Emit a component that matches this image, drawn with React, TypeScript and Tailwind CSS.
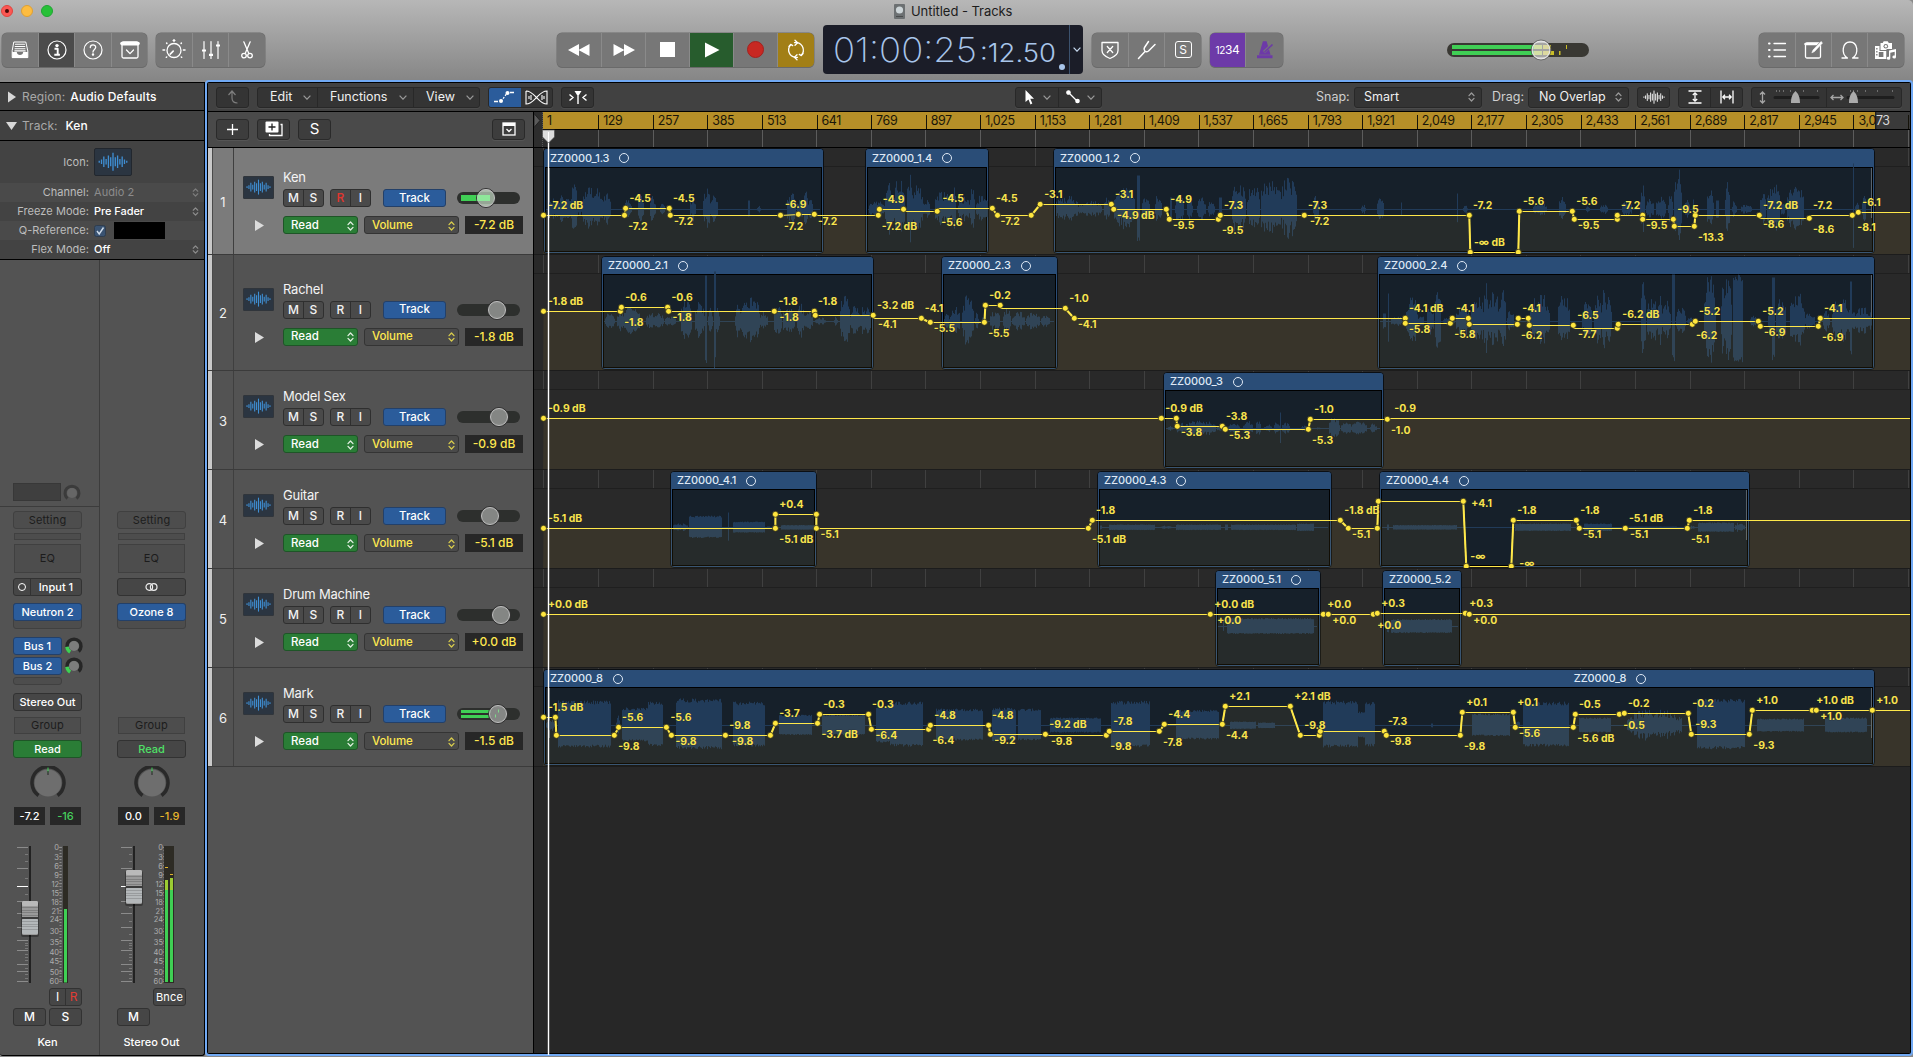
import React from "react";

type P = [number, number, 0?];
type L = [number, number, string];
type W = [number, number, number, number?];
type Region = { x: number; r: number; name: string; dot?: boolean; second?: number; fadeIn?: boolean; fadeOut?: boolean };
type Track = {
  n: number; name: string; top: number; h: string; height: number; db: string; knob: number; meter?: number;
  wy: number; regions: Region[]; pts: P[]; labels: L[]; waves: W[];
};

const tracks: Track[] = [
  {
    n: 1, name: "Ken", top: 148, h: "h-[107px]", height: 107, db: "-7.2 dB", knob: 29, meter: 1, wy: 209.5,
    regions: [{ x: 543, r: 823, name: "ZZ0000_1.3", dot: true, fadeIn: true }, { x: 865, r: 988, name: "ZZ0000_1.4", dot: true }, { x: 1053, r: 1874, name: "ZZ0000_1.2", dot: true, fadeOut: true }],
    pts: [[543.5, 215], [624.5, 215], [625.6, 208], [669.3, 208], [670.3, 215], [780.5, 215], [798.4, 214], [814.3, 214], [815, 215, 0], [878.3, 215], [879.4, 209], [903.5, 209], [904, 211, 0], [937.2, 211], [938, 208, 0], [992.3, 208], [997.5, 215], [1031.2, 215], [1040.2, 204], [1111.3, 204], [1113.7, 209], [1166.3, 209], [1169.3, 219], [1218.3, 219], [1220.3, 215], [1304.3, 215], [1469.3, 215], [1470.3, 252], [1518.3, 252], [1519.3, 211], [1572.3, 211], [1574.3, 219], [1617.3, 219], [1617.3, 215], [1642.7, 215], [1642.7, 219], [1673.3, 219], [1674.3, 226], [1694.3, 226], [1695.3, 215], [1759.3, 215], [1760, 218, 0], [1809.3, 218], [1810, 215, 0], [1852.3, 215], [1858.3, 212], [1910, 212, 0]],
    labels: [[548, 205, "-7.2 dB"], [629.4, 198, "-4.5"], [628.3, 226, "-7.2"], [673, 198, "-4.5"], [674, 221, "-7.2"], [785, 204, "-6.9"], [784, 226, "-7.2"], [818, 221, "-7.2"], [882.8, 199, "-4.9"], [881.8, 226, "-7.2 dB"], [942.4, 198, "-4.5"], [941.3, 222, "-5.6"], [996, 198, "-4.5"], [1000.6, 221, "-7.2"], [1044.3, 194, "-3.1"], [1115, 194, "-3.1"], [1117, 215, "-4.9 dB"], [1170.3, 199, "-4.9"], [1173, 225, "-9.5"], [1224, 205, "-7.3"], [1222, 230, "-9.5"], [1308, 205, "-7.3"], [1310, 221, "-7.2"], [1473, 205, "-7.2"], [1474, 242, "-∞ dB"], [1523, 201, "-5.6"], [1576.3, 201, "-5.6"], [1578, 225, "-9.5"], [1621, 205, "-7.2"], [1646, 225, "-9.5"], [1677.3, 209, "-9.5"], [1698, 237, "-13.3"], [1763, 205, "-7.2 dB"], [1763, 224, "-8.6"], [1813, 205, "-7.2"], [1813, 229, "-8.6"], [1862.3, 202, "-6.1"], [1857.3, 227, "-8.1"]],
    waves: [[549, 557, 12], [557, 570, 15], [570, 578, 27], [578, 582, 10], [582, 603, 24], [603, 611, 18], [625, 632, 12], [638, 644, 16], [650, 656, 14], [660, 665, 6], [690, 696, 13], [703, 711, 21], [711, 718, 14], [748, 750, 9], [757, 761, 5], [787, 796, 18], [797, 804, 12], [804, 808, 36], [808, 813, 13], [869, 885, 9], [885, 893, 27], [893, 905, 29], [907, 912, 41], [912, 923, 27], [923, 930, 11], [935, 952, 18], [952, 956, 28], [958, 970, 13], [970, 975, 24], [976, 988, 14], [1056, 1078, 14], [1078, 1102, 9], [1104, 1110, 13], [1114, 1135, 22], [1137, 1140, 34], [1142, 1150, 13], [1155, 1162, 16], [1170, 1172, 12], [1175, 1184, 15], [1187, 1193, 12], [1197, 1206, 13], [1208, 1215, 9], [1219, 1222, 12], [1232, 1246, 28], [1247, 1260, 27], [1261, 1280, 32], [1280, 1297, 32], [1313, 1319, 16], [1361, 1366, 5], [1377, 1384, 15], [1401, 1402, 7], [1457, 1458, 16], [1463, 1468, 4], [1533, 1547, 7], [1559, 1566, 15], [1586, 1590, 4], [1600, 1608, 5], [1622, 1632, 9], [1640, 1645, 27], [1646, 1654, 12], [1656, 1666, 13], [1668, 1673, 15], [1674, 1682, 42], [1684, 1690, 14], [1693, 1694, 10], [1707, 1714, 23], [1716, 1719, 9], [1725, 1730, 28], [1732, 1737, 9], [1741, 1752, 5], [1760, 1766, 20], [1767, 1780, 27], [1781, 1785, 11], [1787, 1804, 25], [1853, 1854, 46], [1855, 1859, 10], [1862, 1866, 20]],
  },
  {
    n: 2, name: "Rachel", top: 255, h: "h-[116px]", height: 116, db: "-1.8 dB", knob: 40, wy: 321.5,
    regions: [{ x: 601, r: 873, name: "ZZ0000_2.1", dot: true }, { x: 941, r: 1057, name: "ZZ0000_2.3", dot: true }, { x: 1377, r: 1874, name: "ZZ0000_2.4", dot: true, fadeOut: true }],
    pts: [[543.5, 311], [620.4, 311], [621.4, 307], [667.6, 307], [668.6, 311], [774.3, 311], [814.3, 311], [815.3, 315], [873.2, 315], [874, 318, 0], [921.4, 318], [930.3, 322], [984.4, 322], [985.4, 305], [1000.2, 305], [1001, 308, 0], [1065.3, 308], [1074.3, 318], [1405.3, 318], [1405.3, 323], [1450.3, 323], [1452.3, 318], [1468.3, 318], [1469.3, 324], [1517.3, 324], [1518.3, 318], [1528.3, 318], [1529.3, 325], [1573.3, 325], [1574, 328, 0], [1617.3, 328], [1618.3, 324], [1692.3, 324], [1695.3, 321], [1758.3, 321], [1760.3, 326], [1818.3, 326], [1820.3, 318], [1910, 318, 0]],
    labels: [[548, 301, "-1.8 dB"], [625.2, 297, "-0.6"], [624.2, 322, "-1.8"], [671.4, 297, "-0.6"], [672.4, 317, "-1.8"], [778.5, 301, "-1.8"], [779.5, 317, "-1.8"], [818, 301, "-1.8"], [877, 305, "-3.2 dB"], [878, 324, "-4.1"], [924.8, 308, "-4.1"], [933.8, 328, "-5.5"], [989.2, 295, "-0.2"], [988.2, 333, "-5.5"], [1069.3, 298, "-1.0"], [1078, 324, "-4.1"], [1409, 308, "-4.1 dB"], [1409, 329, "-5.8"], [1456, 308, "-4.1"], [1454.3, 334, "-5.8"], [1522.3, 308, "-4.1"], [1521, 335, "-6.2"], [1577.3, 315, "-6.5"], [1578, 334, "-7.7"], [1622.3, 314, "-6.2 dB"], [1699, 311, "-5.2"], [1696, 335, "-6.2"], [1762.3, 311, "-5.2"], [1764, 332, "-6.9"], [1824, 308, "-4.1"], [1822, 337, "-6.9"]],
    waves: [[605, 615, 9], [617, 624, 12], [624, 640, 17], [646, 664, 9], [665, 676, 5], [681, 692, 24], [695, 705, 20], [705, 707, 46], [708, 713, 14], [714, 716, 50], [716, 720, 18], [735, 742, 17], [742, 760, 29], [760, 768, 10], [774, 782, 20], [783, 795, 15], [797, 804, 20], [804, 813, 10], [815, 826, 4], [834, 838, 5], [840, 850, 29], [850, 860, 16], [860, 871, 16], [944, 950, 8], [950, 960, 16], [962, 974, 27], [975, 979, 10], [982, 985, 4], [990, 1000, 11], [1003, 1011, 14], [1012, 1025, 10], [1026, 1040, 9], [1041, 1050, 6], [1383, 1386, 8], [1388, 1389, 28], [1391, 1402, 6], [1406, 1418, 26], [1418, 1424, 8], [1427, 1434, 16], [1435, 1441, 44], [1443, 1455, 5], [1456, 1470, 16], [1471, 1484, 27], [1484, 1488, 44], [1488, 1500, 30], [1500, 1506, 32], [1507, 1514, 12], [1530, 1550, 27], [1558, 1570, 29], [1582, 1592, 20], [1594, 1602, 26], [1602, 1606, 44], [1606, 1612, 28], [1641, 1646, 47], [1647, 1658, 24], [1658, 1662, 34], [1662, 1671, 24], [1672, 1675, 47], [1676, 1686, 15], [1687, 1694, 4], [1704, 1716, 47], [1721, 1732, 47], [1733, 1743, 47, 1], [1750, 1758, 6], [1768, 1772, 16], [1772, 1775, 44], [1776, 1786, 24], [1790, 1805, 29], [1805, 1815, 9], [1823, 1830, 12], [1832, 1850, 24], [1850, 1852, 40], [1852, 1872, 14]],
  },
  {
    n: 3, name: "Model Sex", top: 371, h: "h-[99px]", height: 99, db: "-0.9 dB", knob: 42, wy: 428.5,
    regions: [{ x: 1163, r: 1383, name: "ZZ0000_3", dot: true }],
    pts: [[543.5, 418], [1161.3, 418], [1176.3, 418], [1177.3, 426], [1222.3, 426], [1225.3, 429], [1308.3, 429], [1310.3, 419], [1387.3, 419], [1388, 418, 0], [1910, 418, 0]],
    labels: [[548, 408, "-0.9 dB"], [1165.3, 408, "-0.9 dB"], [1181, 432, "-3.8"], [1226, 416, "-3.8"], [1229, 435, "-5.3"], [1314.3, 409, "-1.0"], [1312, 440, "-5.3"], [1394.3, 408, "-0.9"], [1391, 430, "-1.0"]],
    waves: [[1168, 1173, 3], [1176, 1186, 6], [1186, 1216, 8], [1217, 1222, 4], [1228, 1240, 5], [1243, 1253, 8], [1256, 1261, 10], [1264, 1272, 4], [1274, 1280, 9], [1280, 1281, 16], [1282, 1290, 6], [1301, 1307, 3], [1312, 1322, 1], [1329, 1340, 12], [1341, 1352, 7], [1352, 1367, 7], [1370, 1377, 5]],
  },
  {
    n: 4, name: "Guitar", top: 470, h: "h-[99px]", height: 99, db: "-5.1 dB", knob: 33, wy: 527.5,
    regions: [{ x: 670, r: 816, name: "ZZ0000_4.1", dot: true }, { x: 1097, r: 1331, name: "ZZ0000_4.3", dot: true }, { x: 1379, r: 1749, name: "ZZ0000_4.4", dot: true, fadeOut: true }],
    pts: [[543.5, 528], [775.4, 528], [775.4, 514], [816.4, 514], [816.4, 528], [1088.3, 528], [1092.3, 520], [1340.3, 520], [1348.3, 528], [1377.3, 528], [1378.3, 501], [1463.3, 501], [1466.3, 566], [1511.3, 566], [1513.3, 520], [1576.3, 520], [1579.3, 528], [1625.3, 528], [1687.3, 528], [1689.3, 520], [1910, 520, 0]],
    labels: [[548, 518, "-5.1 dB"], [779.3, 504, "+0.4"], [779.3, 539, "-5.1 dB"], [820.4, 534, "-5.1"], [1096, 510, "-1.8"], [1092, 539, "-5.1 dB"], [1344.3, 510, "-1.8 dB"], [1352, 534, "-5.1"], [1471.3, 503, "+4.1"], [1470.3, 556, "-∞"], [1519.3, 563, "-∞"], [1517.3, 510, "-1.8"], [1580.3, 510, "-1.8"], [1583, 534, "-5.1"], [1629, 518, "-5.1 dB"], [1630, 534, "-5.1"], [1693.3, 510, "-1.8"], [1691, 539, "-5.1"]],
    waves: [[673, 688, 4], [689, 722, 12, 1], [728, 729, 15], [733, 765, 6, 1], [767, 770, 1], [781, 815, 2.5, 1], [1100, 1102, 2], [1109, 1155, 3, 1], [1160, 1172, 2], [1176, 1221, 3, 1], [1225, 1228, 3], [1231, 1296, 3, 1], [1297, 1314, 4, 1], [1387, 1389, 3], [1393, 1457, 2.5, 1], [1515, 1571, 4, 1], [1584, 1612, 4, 1], [1625, 1677, 1, 1], [1690, 1695, 2], [1698, 1734, 5, 1], [1735, 1745, 5]],
  },
  {
    n: 5, name: "Drum Machine", top: 569, h: "h-[99px]", height: 99, db: "+0.0 dB", knob: 44, wy: 626.5,
    regions: [{ x: 1215, r: 1320, name: "ZZ0000_5.1", dot: true }, { x: 1382, r: 1461, name: "ZZ0000_5.2" }],
    pts: [[543.5, 614], [1210.3, 614], [1323.3, 614], [1328.3, 614], [1373.3, 614], [1377.3, 613], [1465.3, 613], [1469.3, 614], [1910, 614, 0]],
    labels: [[548, 604, "+0.0 dB"], [1214.3, 604, "+0.0 dB"], [1217.3, 620, "+0.0"], [1327.3, 604, "+0.0"], [1332.3, 620, "+0.0"], [1381.3, 603, "+0.3"], [1377.3, 625, "+0.0"], [1469.3, 603, "+0.3"], [1473.3, 620, "+0.0"]],
    waves: [[1223, 1224, 6], [1227, 1314, 8.5, 1], [1387, 1389, 7, 1], [1391, 1452, 7.5, 1]],
  },
  {
    n: 6, name: "Mark", top: 668, h: "h-[99px]", height: 99, db: "-1.5 dB", knob: 41, meter: 2, wy: 725.5,
    regions: [{ x: 543, r: 1874, name: "ZZ0000_8", dot: true, second: 1573, fadeIn: true, fadeOut: true }],
    pts: [[543.5, 717], [555.4, 717], [556.4, 735], [614.3, 735], [618.6, 727], [666.4, 727], [671.4, 735], [725.4, 735], [770.4, 735], [775.4, 723], [817.5, 723], [819.6, 714], [868.6, 714], [871.4, 729], [928.6, 729], [930.4, 725], [988.6, 725], [990.4, 734], [1045.4, 734], [1046, 735, 0], [1106.3, 735], [1109.3, 731], [1159.3, 731], [1164.3, 724], [1222.3, 724], [1225.3, 706], [1290.3, 706], [1300.3, 735], [1319.3, 735], [1320.3, 731], [1384.3, 731], [1386.3, 735], [1460.3, 735], [1462.3, 712], [1513.3, 712], [1515.3, 727], [1573.3, 727], [1575.3, 714], [1619.3, 714], [1624.3, 713], [1688.3, 713], [1691.3, 734], [1749.3, 734], [1752.3, 710], [1812.3, 710], [1816.3, 710], [1872.3, 710], [1910, 710, 0]],
    labels: [[548, 707, "-1.5 dB"], [622.1, 717, "-5.6"], [618.2, 746, "-9.8"], [670.4, 717, "-5.6"], [675.4, 741, "-9.8"], [729.3, 725, "-9.8"], [732.1, 741, "-9.8"], [779.3, 713, "-3.7"], [823.2, 704, "-0.3"], [821.4, 734, "-3.7 dB"], [872.1, 704, "-0.3"], [875.4, 735, "-6.4"], [934.3, 715, "-4.8"], [932.5, 740, "-6.4"], [992.1, 715, "-4.8"], [994.3, 740, "-9.2"], [1049.3, 724, "-9.2 dB"], [1051, 741, "-9.8"], [1113.3, 721, "-7.8"], [1110.3, 746, "-9.8"], [1168.3, 714, "-4.4"], [1163, 742, "-7.8"], [1229.3, 696, "+2.1"], [1226, 735, "-4.4"], [1294.3, 696, "+2.1 dB"], [1304.3, 725, "-9.8"], [1388, 721, "-7.3"], [1390, 741, "-9.8"], [1466.3, 702, "+0.1"], [1464, 746, "-9.8"], [1517.3, 702, "+0.1"], [1519, 733, "-5.6"], [1579, 704, "-0.5"], [1577.3, 738, "-5.6 dB"], [1628, 703, "-0.2"], [1623.3, 725, "-0.5"], [1692.3, 703, "-0.2"], [1695.3, 724, "-9.3"], [1756.3, 700, "+1.0"], [1753.3, 745, "-9.3"], [1816.3, 700, "+1.0 dB"], [1820.3, 716, "+1.0"], [1876.3, 700, "+1.0"]],
    waves: [[546, 555, 6], [558, 611, 25, 1], [616, 620, 10], [622, 648, 18, 1], [648, 663, 24, 1], [676, 722, 27, 1], [733, 765, 24, 1], [779, 812, 11, 1], [822, 865, 11, 1], [876, 890, 20, 1], [890, 923, 24, 1], [936, 983, 17, 1], [992, 1016, 18, 1], [1018, 1041, 17, 1], [1050, 1101, 8, 1], [1111, 1150, 25, 1], [1176, 1219, 16, 1], [1230, 1256, 4, 1], [1258, 1275, 3, 1], [1323, 1358, 25, 1], [1358, 1365, 14, 1], [1365, 1375, 24, 1], [1431, 1433, 2], [1472, 1510, 12, 1], [1516, 1520, 6], [1523, 1569, 24, 1], [1579, 1611, 8, 1], [1627, 1682, 16], [1697, 1745, 27, 1], [1757, 1804, 7, 1], [1825, 1867, 8, 1]],
  },
];

const GRID = Array.from({ length: 26 }, (_, i) => Math.round(543.4 + 54.58 * i) + 0.5);

function rand(seed: number) {
  let s = seed;
  return () => {
    s = (s * 1103515245 + 12345) & 0x7fffffff;
    return s / 0x7fffffff;
  };
}

function wavePath(t: Track) {
  const r = rand(t.n * 7919 + 11);
  let d = "";
  t.waves.forEach(([a, b, amp, flat]) => {
    for (let x = a; x < b; x++) {
      const edge = b - a < 4 ? 1 : Math.min(1, 0.6 + Math.min(x - a, b - 1 - x) / Math.max(2, (b - a) * 0.6));
      const up = flat ? amp * (0.84 + 0.16 * r()) : amp * (b - a < 4 ? 1 : 0.45 + 0.55 * r()) * edge;
      const dn = flat ? amp * (0.76 + 0.12 * r()) : up * (0.7 + 0.25 * r());
      d += `M${x + 0.5} ${(t.wy - Math.max(0.5, up)).toFixed(1)}V${(t.wy + Math.max(0.5, dn)).toFixed(1)}`;
    }
  });
  return d;
}

const Bars = ({ w, color, sw = 1.15 }: { w: number; color: string; sw?: number }) => {
  const hs = [0.8, 2, 4.5, 2.5, 5.5, 4, 7.8, 4, 5.5, 2.5, 4.5, 2, 0.8];
  return (
    <svg width={w} height={w * 0.65} viewBox="0 0 26 17" fill="none" stroke={color} strokeWidth={sw}>
      {hs.map((h, i) => <path key={i} d={`M${1 + i * 2} ${8.5 - h}V${8.5 + h}`} />)}
    </svg>
  );
};

const UpDown = ({ color, h = 9 }: { color: string; h?: number }) => (
  <svg width="7" height={h} viewBox="0 0 7 10" fill="none" stroke={color} strokeWidth="1.3" strokeLinecap="round" strokeLinejoin="round" className="shrink-0">
    <path d="M1 3.6 3.5 1 6 3.6M1 6.4 3.5 9 6 6.4" />
  </svg>
);
const Chevron = ({ color = "#9a9a9a" }: { color?: string }) => (
  <svg width="8" height="5" viewBox="0 0 8 5" fill="none" stroke={color} strokeWidth="1.2" className="shrink-0"><path d="M.6.6 4 4.2 7.4.6" /></svg>
);

/* ---------- top toolbar ---------- */
const group = "flex h-[34px] overflow-hidden rounded-[5px] bg-[#777777] shadow-[0_1px_0_#6a6a6a,0_0_0_0.5px_#6c6c6c]";
const Seg = ({ w, bg = "", children }: { w: string; bg?: string; children: React.ReactNode }) => (
  <div className={`flex shrink-0 items-center justify-center border-r border-[#8a8a8a] last:border-r-0 ${w} ${bg}`}>{children}</div>
);
const I = ({ s = 20, children, fill = "none", sw = 1.3 }: { s?: number; children: React.ReactNode; fill?: string; sw?: number }) => (
  <svg width={s} height={s} viewBox="0 0 20 20" fill={fill} stroke="#fff" strokeWidth={sw} strokeLinecap="round" strokeLinejoin="round">{children}</svg>
);

function Toolbar() {
  return (
    <div className="flex h-[54px] items-start">
      <div className={`${group} ml-[2px] mt-[6px] w-[145px]`}>
        <Seg w="w-[37px]">
          <I><path d="M4.2 2h11.6l2 9v6.600H2.200V11Z" strokeWidth="1" /><path d="M2.200 12h4.600c0 4 6.400 4 6.400 0h4.600v6H2.200Z" fill="#fff" stroke="none" /><path d="M5.500 4.300h9M5.200 6.500h9.600M5 8.700h10M4.800 10.900h10.400" strokeWidth="1.100" /></I>
        </Seg>
        <Seg w="w-[36px]" bg="bg-[#4b4b4b]">
          <I><circle cx="10" cy="10" r="9" strokeWidth="1.2" /><circle cx="10" cy="5.6" r="1.7" fill="#fff" stroke="none" /><path d="M7.500 8.700h3.200v5.800M7.300 14.700h5.600" strokeWidth="1.900" strokeLinecap="butt" /></I>
        </Seg>
        <Seg w="w-[37px]">
          <I><circle cx="10" cy="10" r="9" strokeWidth="1.2" /><path d="M7.300 7.600c0-3.600 5.400-3.500 5.400-.3 0 2.100-2.700 2.200-2.700 4.700" strokeWidth="1.300" /><circle cx="10" cy="14.6" r=".6" fill="#fff" /></I>
        </Seg>
        <Seg w="w-[35px]">
          <I><rect x="2" y="2" width="16" height="16" rx="1.5" /><path d="M2 3.600h16" strokeWidth="3.600" /><path d="m6.500 10 3.500 3.600 3.500-3.600" /></I>
        </Seg>
      </div>
      <div className={`${group} ml-[9px] mt-[6px] w-[109px]`}>
        <Seg w="w-[37px]">
          <svg width="24" height="24" viewBox="0 0 24 24" fill="none" stroke="#fff" strokeWidth="1.3" strokeLinecap="round"><circle cx="12" cy="12.5" r="7" /><path d="m8.200 16.100 3-3" strokeWidth="1.600" /><path d="M12 1.700v1.600M11.200 2.500h1.600M4.600 5.100l.3.3M19.100 5.400l.3-.3M1 12.100h1.600M21.400 12.100H23M4.300 19.300l.4-.3M19.300 19l.4.3" strokeWidth="1.500" /></svg>
        </Seg>
        <Seg w="w-[36px]">
          <I><path d="M3 1.500v17M10 1.500v17M17 1.500v17" strokeWidth="1.200" /><path d="M1 10.500h4M8 14.800h4M15 5.500h4" strokeWidth="2.200" strokeLinecap="butt" /></I>
        </Seg>
        <Seg w="w-[36px]">
          <I><path d="M6.800 1.800 11.600 13M13.200 1.800 8.400 13" /><circle cx="7" cy="15.600" r="2.300" /><circle cx="13" cy="15.600" r="2.300" /></I>
        </Seg>
      </div>
      <div className={`${group} ml-[292px] mt-[6px] w-[257px]`}>
        <Seg w="w-[45px]"><svg width="22" height="14" fill="#fff"><path d="M11 1v12L0 7ZM21.500 1v12L10.500 7Z" /></svg></Seg>
        <Seg w="w-[44px]"><svg width="22" height="14" fill="#fff"><path d="M11 1v12L22 7ZM.5 1v12l11-6Z" /></svg></Seg>
        <Seg w="w-[44px]"><div className="h-[15px] w-[15px] bg-white" /></Seg>
        <Seg w="w-[44px]" bg="bg-[#275c2d]"><svg width="16" height="16" fill="#fff"><path d="M1 .5v15L15.500 8Z" /></svg></Seg>
        <Seg w="w-[44px]"><div className="h-[17px] w-[17px] rounded-full border border-[#a3221f] bg-[#c82822]" /></Seg>
        <Seg w="w-[36px]" bg="bg-[#a27f16]">
          <svg width="22" height="22" viewBox="0 0 22 22" fill="none" stroke="#fff" strokeWidth="1.3" strokeLinecap="round" strokeLinejoin="round"><path d="M9.500 3.700H12a7.400 7.400 0 0 1 4.500 12.200M12.500 18.300H10A7.400 7.400 0 0 1 5.500 6.100" /><path d="M10 1.200l2.600 2.500L10 6.200M12 15.800l-2.600 2.500 2.600 2.500M14.300 15.400l2 1.200 1.700-2M7.700 6.600l-2-1.200-1.700 2" /></svg>
        </Seg>
      </div>
      <div className="ml-[9px] mt-[-2px] flex h-[49px] w-[260px] items-stretch rounded-[4px] bg-[#1b1d28]">
        <svg width="246" height="49" fill="#a8c5ea" fontFamily="Inter, Roboto, sans-serif">
          <text x="10" y="37" fontSize="34" fontWeight="200" textLength="144" lengthAdjust="spacingAndGlyphs">01:00:25</text>
          <text x="157" y="37" fontSize="25" fontWeight="300" textLength="76" lengthAdjust="spacingAndGlyphs">:12.50</text>
          <circle cx="239" cy="42" r="3" />
        </svg>
        <div className="flex flex-1 items-center justify-center border-l border-[#3c526e]"><Chevron color="#c6d8ee" /></div>
      </div>
      <div className={`${group} ml-[9px] mt-[6px] w-[109px]`}>
        <Seg w="w-[37px]"><I><path d="M2 2.500h16v8c0 4-4 6.500-8 8-4-1.500-8-4-8-8Z" /><path d="m7.300 6.500 5.400 6M12.700 6.500l-5.400 6" /></I></Seg>
        <Seg w="w-[36px]"><I><path d="M1.500 18.500 8 11.500M11.500 1.500 7.500 7.500c-1.500 2.500 1 5.500 4 3.500l6.500-6.500" strokeWidth="1.500" /></I></Seg>
        <Seg w="w-[36px]"><div className="flex h-[17px] w-[17px] items-center justify-center rounded-[3px] border-[1.5px] border-white text-[12px] leading-none text-white">S</div></Seg>
      </div>
      <div className={`${group} ml-[9px] mt-[6px] w-[73px]`}>
        <Seg w="w-[36px]" bg="bg-[#6d3aa8]"><span className="text-[12px] tracking-[-0.3px] text-white"><span className="text-[10px]">12</span>34</span></Seg>
        <Seg w="w-[37px]"><svg width="18" height="18" viewBox="0 0 18 18" fill="none" stroke="#6d3aa8" strokeWidth="1.6"><path d="M7.500 1h2.500l3.500 12h-9.500Z" fill="#6d3aa8" /><path d="M1 15.800h15.500" strokeWidth="3" /><path d="m8 11 8-7.500" stroke="#777" strokeWidth="3" /><path d="m8.500 11 8-7.500" /></svg></Seg>
      </div>
      <div className="ml-[164px] mt-[16px] flex h-[14px] w-[142px] items-center rounded-full bg-[#393833] pl-[5px]">
        <svg width="132" height="20" className="overflow-visible">
          <path d="M0 5h82v4H0ZM0 11h82v4H0Z" fill="#40cf55" />
          <path d="M82 5h8v4h-8ZM82 11h8v4h-8Z" fill="#b4d238" />
          <path d="M91 5h8v4h-8ZM91 11h11v4H91ZM114 5h1v4h-1ZM107 11h1.500v4H107Z" fill="#c9bd28" />
          <circle cx="89" cy="10" r="9" fill="#e8e8e8" fillOpacity=".62" stroke="#e6e6e6" strokeWidth="1.300" />
          <circle cx="89" cy="10" r="10" fill="none" stroke="#555" strokeWidth=".7" />
        </svg>
      </div>
      <div className={`${group} ml-[170px] mt-[6px] w-[145px]`}>
        <Seg w="w-[37px]"><I><path d="M7 3.500h11.500M7 10h11.500M7 16.500h11.500" /><path d="M2 3.500h.6M2 10h.6M2 16.500h.6" strokeWidth="2" /></I></Seg>
        <Seg w="w-[36px]"><I><rect x="1.500" y="3" width="15" height="15" rx="1.500" /><path d="M1.500 4h13" strokeWidth="2.500" /><path d="M8.500 12 18 1.500" strokeWidth="3" stroke="#777" /><path d="m8 12.500 1-2.500 8-8.500 1.500 1.400-8 8.600Z" fill="#fff" strokeWidth=".6" /></I></Seg>
        <Seg w="w-[36px]"><I><path d="M2 18h5.500C.5 13.500 2.500 2 10 2s9.500 11.500 2.500 16H18" /></I></Seg>
        <Seg w="w-[36px]">
          <svg width="22" height="20" viewBox="0 0 22 20" fill="#fff"><path d="M5.500 3h2.200l1-1.800h4L13.800 3H17v7H5.500Z" /><circle cx="10.800" cy="6.300" r="2.300" fill="#777" /><circle cx="10.800" cy="6.300" r="1.200" /><path d="M0 6h4.500v5h7v8H0Z" /><path d="M1.200 8h1.300v1.500H1.200ZM1.200 11h1.300v1.500H1.200ZM1.200 14h1.300v1.500H1.200ZM3.800 12h4.600v5H3.800Z" fill="#777" /><path d="M11.500 9h10v11h-10Z" fill="#777" /><path d="M14 10.500 21 9v8a1.800 1.500 0 1 1-1.300-1.400v-3.800l-4.400 1v5.400a1.800 1.500 0 1 1-1.300-1.400Z" /></svg>
        </Seg>
      </div>
    </div>
  );
}

/* ---------- inspector ---------- */
const propRow = "flex h-[19px] items-center text-[11px]";
const propLabel = "w-[89px] text-right text-[#bdbdbd]";

function PropPanel() {
  return (
    <div className="flex h-[178px] flex-col border-b border-black bg-[#434343] tracking-[0.05px]">
      <div className="flex h-[29px] items-center border-y border-black bg-[#414141] pl-[8px] text-[12px]">
        <svg width="8" height="12" fill="#d8d8d8"><path d="M0 .5v11L8 6Z" /></svg>
        <span className="ml-[6px] tracking-[0.1px] text-[#a8a8a8]">Region:</span><span className="ml-[5px] font-medium tracking-[0.15px] text-white">Audio Defaults</span>
      </div>
      <div className="flex h-[30px] items-center border-b border-black bg-[#414141] pl-[6px] text-[12px]">
        <svg width="11" height="8" fill="#d8d8d8"><path d="M0 0h11L5.500 8Z" /></svg>
        <span className="ml-[5px] text-[#a8a8a8]">Track:</span><span className="ml-[8px] font-medium text-white">Ken</span>
      </div>
      <div className="flex h-[42px] items-center text-[11px]">
        <span className={propLabel}>Icon:</span>
        <div className="ml-[5px] flex h-[28px] w-[38px] items-center justify-center rounded-[2px] border border-[#22272e] bg-[#2b3541]"><Bars w={30} color="#3f8fd4" /></div>
      </div>
      <div className={`${propRow} bg-[#4a4a4a]`}><span className={propLabel}>Channel:</span><span className="ml-[5px] flex-1 text-[#8c8c8c]">Audio 2</span><span className="mr-[5px]"><UpDown color="#7c7c7c" /></span></div>
      <div className={propRow}><span className={propLabel}>Freeze Mode:</span><span className="ml-[5px] flex-1 font-medium tracking-[-0.05px] text-white">Pre Fader</span><span className="mr-[5px]"><UpDown color="#8c8c8c" /></span></div>
      <div className={`${propRow} bg-[#4a4a4a]`}>
        <span className={propLabel}>Q-Reference:</span>
        <svg width="12" height="12" className="ml-[5px]"><rect x=".5" y=".5" width="11" height="11" rx="2" fill="#3a5372" stroke="#2f3c4d" /><path d="m3 6 2.200 3L9.500 2.500" fill="none" stroke="#cfdcea" strokeWidth="1.400" /></svg>
        <div className="ml-[8px] h-[17px] w-[51px] bg-black" />
      </div>
      <div className={propRow}><span className={propLabel}>Flex Mode:</span><span className="ml-[5px] flex-1 font-medium text-white">Off</span><span className="mr-[5px]"><UpDown color="#8c8c8c" /></span></div>
    </div>
  );
}

const cell = "flex items-center justify-center rounded-[3px] border text-[11px]";
const slot = `${cell} border-[#323232] bg-[#464646] font-medium text-white`;
const blue = `${cell} border-[#234069] bg-[#2b5c9b] font-medium text-white`;
const green = `${cell} border-[#1e5527] bg-[#2a7d36] font-medium text-white`;
const faint = "flex items-center justify-center border border-[#404040] bg-[#4d4d4d] text-[11px] tracking-[0.2px] text-[#1c1c1c]";

const SendKnob = () => (
  <svg width="18" height="18" viewBox="0 0 18 18" fill="none"><path d="M4.400 14.400A7 7 0 1 1 13.600 14.400" stroke="#262626" strokeWidth="3.400" /><path d="M5.200 15A7 7 0 0 1 2 9.800" stroke="#3fd055" strokeWidth="3.600" /><circle cx="9" cy="9" r="5" fill="#7d7d7d" /></svg>
);
const PanKnob = () => (
  <svg width="36" height="32" viewBox="0 0 36 32" fill="none">
    <path d="M8.500 29.500A16 16 0 1 1 27.500 29.500" stroke="#292929" strokeWidth="3.500" />
    <circle cx="18" cy="17" r="13.500" fill="#6e6e6e" /><path d="M18 1.500v5" stroke="#3fd055" strokeWidth="1" /><path d="M18 5v4" stroke="#222" />
  </svg>
);

const meterNums: [number, string][] = [[847.4, "0"], [856.7, "3"], [865.7, "6"], [874.7, "9"], [883.7, "12"], [892.7, "15"], [901.7, "18"], [910.7, "21"], [919.6, "24"], [931.6, "30"], [941.7, "35"], [951.8, "40"], [961.6, "45"], [971.7, "50"], [981.4, "60"]];
const longTicks = [847.5, 868.5, 901.5, 913.5, 927.5, 940.5, 950.5, 964.5, 971.5, 981.5];
const shortTicks = [854.5, 861.5, 878.5, 894.5, 907.5, 921.5, 934.5, 943.5, 945.5, 948.5, 954.5, 957.5, 960.5, 968.5, 974.5, 978.5];

function Fader({ cap, stereo }: { cap: number; stereo?: boolean }) {
  return (
    <svg width="99" height="142" viewBox="0 844 99 142" fontFamily="Inter, sans-serif">
      <g stroke="#8b8b8b">
        {longTicks.map((y) => <path key={y} d={`M17 ${y}h11`} />)}
        {shortTicks.map((y) => <path key={y} d={`M25 ${y}h3`} strokeOpacity=".7" />)}
        <path d="M17 886.500h11" stroke="#fff" />
      </g>
      <rect x="29" y="846" width="2" height="137" fill="#222" />
      <path d="M60.500 847v135" stroke="#8b8b8b" strokeDasharray="1 2" strokeWidth="2" />
      {meterNums.map(([y, s]) => (
        <g key={s}><text x="59" y={y + 2.8} fontSize="7.5" textAnchor="end" fill="#adadad">{s}</text><path d={`M59 ${y}h3`} stroke="#8b8b8b" /></g>
      ))}
      {stereo ? (
        <>
          <rect x="60" y="846" width="10" height="137" fill="#2d2b24" />
          <rect x="61" y="880" width="3" height="102" fill="#3fcf54" /><rect x="66" y="878" width="3" height="104" fill="#3fcf54" />
          <rect x="61" y="880" width="3" height="10" fill="#9bcc33" /><rect x="66" y="878" width="3" height="12" fill="#9bcc33" />
          <path d="M61 867.500h3M66 874.500h3" stroke="#e0b52d" />
        </>
      ) : (
        <><rect x="63" y="846" width="5" height="137" fill="#2d2b24" /><rect x="64" y="909" width="3" height="73.500" fill="#3fcf54" /></>
      )}
      <g transform={`translate(22 ${cap})`}>
        <rect x="-1" y="1" width="18" height="35" rx="2" fill="#000" fillOpacity=".3" />
        <rect width="16" height="34" rx="1.500" fill="#9a9a9a" />
        <rect width="16" height="5" rx="1.500" fill="#b9b9b9" />
        <path d="M0 6.500h16M0 9.500h16M0 11.500h16M0 14.500h16" stroke="#7f7f7f" />
        <path d="M0 17h16" stroke="#1c1c1c" strokeWidth="1.500" />
        <rect y="18" width="16" height="15" rx="1.500" fill="#b4b8ba" /><path d="M0 20.500h16M0 23.500h16M0 25.500h16M0 28.500h16" stroke="#989b9d" />
      </g>
    </svg>
  );
}

function Strip({ master }: { master?: boolean }) {
  return (
    <div className={`flex h-[795px] flex-col ${master ? "w-[104px] pl-[4px]" : "w-[100px] border-r border-[#3c3c3c]"}`}>
      {master ? <div className="h-[247px]" /> : (
        <div className="mt-[223px] flex h-[24px] items-start gap-[2px] border-b border-[#3c3c3c] pl-[13px]">
          <div className="h-[18px] w-[48px] border border-[#383838] bg-[#3f3f3f]" />
          <svg width="18" height="18" fill="none"><path d="M4.500 15.500A7 7 0 1 1 13.500 15.500" stroke="#3b3b3b" strokeWidth="3" /><circle cx="9" cy="10" r="5" fill="#666" /></svg>
        </div>
      )}
      <div className="ml-[13px] flex w-[69px] flex-col">
        <div className={`${faint} mt-[4px] h-[18px] rounded-[3px] border-[#353535]`}>Setting</div>
        <div className={`${faint} mx-px mt-[4px] h-[7px]`} />
        <div className={`${faint} mx-px mt-[4px] h-[29px]`}>EQ</div>
        <div className={`${slot} mt-[5px] h-[18px]`}>
          {master ? <svg width="13" height="8" fill="none" stroke="#eee" strokeWidth="1.200"><circle cx="4.300" cy="4" r="3.300" /><circle cx="8.700" cy="4" r="3.300" /></svg> : (
            <><span className="flex h-full w-[17px] items-center justify-center border-r border-[#323232]"><span className="h-[8px] w-[8px] rounded-full border-[1.5px] border-white" /></span><span className="flex-1 text-center">Input 1</span></>
          )}
        </div>
        <div className="mt-[7px] h-[26px] rounded-[3px] border border-[#404040] bg-[#4d4d4d]">
          <div className={`${blue} -mx-px -mt-px h-[18px]`}>{master ? "Ozone 8" : "Neutron 2"}</div>
        </div>
        {master ? <div className="h-[88px]" /> : (
          <>
            <div className="mt-[8px] flex h-[18px] items-center"><div className={`${blue} h-[18px] w-[49px] shrink-0`}>Bus 1</div><span className="ml-[3px]"><SendKnob /></span></div>
            <div className="mt-[2px] flex h-[18px] items-center"><div className={`${blue} h-[18px] w-[49px] shrink-0`}>Bus 2</div><span className="ml-[3px]"><SendKnob /></span></div>
            <div className={`${faint} mt-[2px] h-[8px] w-[49px] rounded-[3px]`} />
            <div className={`${slot} mt-[8px] h-[18px] whitespace-nowrap`}>Stereo Out</div>
            <div className="h-[6px]" />
          </>
        )}
        <div className={`${faint} mx-px h-[17px]`}>Group</div>
        {master ? <div className={`${cell} mt-[6px] h-[18px] border-[#323232] bg-[#464646] font-medium text-[#4fe067]`}>Read</div> : <div className={`${green} mt-[6px] h-[18px]`}>Read</div>}
        <div className="mt-[8px] flex justify-center"><PanKnob /></div>
        <div className="mx-px mt-[9px] flex h-[18px] justify-between text-[11px] font-medium">
          <div className="flex w-[31px] items-center justify-center bg-[#272727] text-white">{master ? "0.0" : "-7.2"}</div>
          <div className={`flex w-[31px] items-center justify-center bg-[#272727] ${master ? "text-[#e8b72c]" : "text-[#46cf5c]"}`}>{master ? "-1.9" : "-16"}</div>
        </div>
      </div>
      <div className="mt-[19px] h-[142px]"><Fader cap={master ? 870 : 901} stereo={master} /></div>
      <div className="ml-[13px] mt-[2px] flex w-[69px] justify-end">
        {master ? <div className={`${cell} h-[18px] w-[33px] border-[#323232] bg-[#464646] tracking-[0.2px] text-white`}>Bnce</div> : (
          <div className={`${cell} h-[18px] w-[33px] border-[#323232] bg-[#464646] text-white`}><span className="flex h-full flex-1 items-center justify-center border-r border-[#323232] text-[12px]">I</span><span className="flex-1 text-center text-[12px] text-[#e03c34]">R</span></div>
        )}
      </div>
      <div className="ml-[13px] mt-[2px] flex w-[69px] justify-between">
        <div className={`${slot} h-[18px] w-[33px]`}><span className="text-[12px]">M</span></div>
        {!master && <div className={`${slot} h-[18px] w-[33px]`}><span className="text-[12px]">S</span></div>}
      </div>
      <div className="ml-[8px] mt-[8px] w-[79px] whitespace-nowrap text-center text-[11px] font-medium leading-[16px] text-white">{master ? "Stereo Out" : "Ken"}</div>
    </div>
  );
}

/* ---------- tracks area ---------- */
const mbtn = "flex h-[21px] items-center rounded-[3px] border border-[#282828] bg-[#343434] shadow-[0_1px_0_#4c4c4c]";

function MenuBar() {
  return (
    <div className="flex h-[29px] items-center border-b border-black bg-[#414141] pl-[8px] text-[12.5px] text-[#f0f0f0]">
      <div className={`${mbtn} w-[33px] justify-center`}><svg width="12" height="14" fill="none" stroke="#7e7e7e" strokeWidth="1.200"><path d="M1.500 5 5 1l3.500 4M5 1v7c0 3 2 5 5.500 5" /></svg></div>
      <div className={`${mbtn} ml-[8px] w-[223px]`}>
        <div className="flex h-full w-[60px] items-center justify-between border-r border-[#282828] pl-[12px] pr-[6px]">Edit<Chevron /></div>
        <div className="flex h-full w-[96px] items-center justify-between border-r border-[#282828] pl-[12px] pr-[6px]">Functions<Chevron /></div>
        <div className="flex h-full flex-1 items-center justify-between pl-[12px] pr-[5px]">View<Chevron /></div>
      </div>
      <div className={`${mbtn} ml-[8px] w-[65px] overflow-hidden`}>
        <div className="flex h-full w-[32px] items-center justify-center bg-[#2b5c9b]"><svg width="24" height="14" stroke="#fff" strokeWidth="1.500" fill="#fff"><path d="M1 11.500h4M17 2.500h4" /><path d="m8 11.500 6.500-9" strokeWidth="1.200" strokeDasharray="2 1.500" /><circle cx="8" cy="11" r="2" stroke="none" /><circle cx="14.500" cy="3" r="2" stroke="none" /></svg></div>
        <div className="flex h-full flex-1 items-center justify-center"><svg width="23" height="15" fill="none" stroke="#fff" strokeWidth="1.100"><path d="M1 1v13c5 0 8-4 10.500-6.500S17 1 22 1v13c-5 0-8-4-10.500-6.500S6 1 1 1" /><path d="M4 6v3M6 5v5M19 6v3M17 5v5" /></svg></div>
      </div>
      <div className={`${mbtn} ml-[8px] w-[33px] justify-center`}><svg width="20" height="15" fill="none" stroke="#fff" strokeWidth="1.400"><path d="m1.500 4.500 3.500 3-3.500 3M18.500 4.500l-3.500 3 3.500 3M10 4v10" /><path d="M6.500 1h7L11 5H9Z" fill="#fff" stroke="none" /></svg></div>
      <div className={`${mbtn} ml-[421px] w-[87px]`}>
        <div className="flex h-full w-[43px] items-center justify-center gap-[8px] border-r border-[#282828]"><svg width="11" height="15" fill="#fff"><path d="M1.500 0v12l3-2.600 2 5 1.800-.8-2-4.800H10Z" /></svg><Chevron /></div>
        <div className="flex h-full flex-1 items-center justify-center gap-[7px]"><svg width="14" height="14" fill="#fff" stroke="#fff" strokeWidth="1.200"><path d="m2.500 2.500 9 9" /><circle cx="2.500" cy="2.500" r="1.700" /><circle cx="11.500" cy="11" r="1.700" /></svg><Chevron /></div>
      </div>
      <span className="ml-[214px] w-[34px] text-[#d0d0d0]">Snap:</span>
      <div className={`${mbtn} ml-[4px] w-[128px] justify-between pl-[9px] pr-[6px]`}>Smart<UpDown color="#9a9a9a" h={12} /></div>
      <span className="ml-[10px] w-[33px] text-[#d0d0d0]">Drag:</span>
      <div className={`${mbtn} ml-[3px] w-[101px] justify-between whitespace-nowrap pl-[10px] pr-[6px]`}>No Overlap<UpDown color="#9a9a9a" h={12} /></div>
      <div className={`${mbtn} ml-[8px] w-[33px] justify-center`}><Bars w={22} color="#fff" sw={1.1} /></div>
      <div className={`${mbtn} ml-[8px] w-[65px]`}>
        <div className="flex h-full w-[32px] items-center justify-center border-r border-[#282828]"><svg width="14" height="14" fill="none" stroke="#fff" strokeWidth="1.300"><path d="M.5 1h13M.5 13h13M7 3v8M4.800 5 7 2.800 9.200 5M4.800 9 7 11.200 9.200 9" /></svg></div>
        <div className="flex h-full flex-1 items-center justify-center"><svg width="14" height="14" fill="none" stroke="#fff" strokeWidth="1.300"><path d="M1 .5v13M13 .5v13M3 7h8M5 4.800 2.800 7 5 9.200M9 4.800 11.200 7 9 9.200" /></svg></div>
      </div>
      <div className={`${mbtn} ml-[8px] w-[151px]`}>
        <svg width="149" height="19" fill="none">
          <path d="M10.500 4v11M8 6.500 10.500 4 13 6.500M8 12.500l2.500 2.500 2.500-2.500M79 9.500h12M81.500 7 79 9.500l2.500 2.500M88.500 7 91 9.500 88.500 12" stroke="#a5a5a5" strokeWidth="1.300" />
          <path d="M74.500 0v19" stroke="#282828" />
          <path d="M23 9.500h43M96 9.500h45" stroke="#1e1e1e" strokeWidth="3" strokeLinecap="round" />
          <path d="M24.500 2v2M27.500 2v2M31.500 2v2M38.500 2v2M51.500 2v2M65.500 2v2M98.500 2v2M101.500 2v2M105.500 2v2M113.500 2v2M125.500 2v2M140.500 2v2" stroke="#6f6f6f" />
          <path d="M43.500 3c3 3 4.500 6 4.500 12h-9c0-6 1.500-9 4.500-12ZM101.500 3c3 3 4.500 6 4.500 12h-9c0-6 1.500-9 4.500-12Z" fill="#ababab" />
        </svg>
      </div>
    </div>
  );
}

const tb = "flex h-[18px] rounded-[3px] border border-[#2f2f2f] bg-[#4a4a4a] text-[12px] font-medium text-[#f2f2f2]";

function TrackHeader({ t }: { t: Track }) {
  const sel = t.n === 1;
  return (
    <div className={`flex ${t.h} border-b border-[#3b3b3b] ${sel ? "bg-[#7b7b7b]" : "bg-[#535353]"}`}>
      <div className="w-[5px] border-r border-[#4a4a4a] bg-[#c9c9c9]" />
      <div className="flex w-[21px] items-center justify-center border-r border-[#3f3f3f] pt-[3px] text-[13px] text-[#f0f0f0]">{t.n}</div>
      <div className="flex flex-1 items-center pl-[9px]">
        <div className="flex h-[66px] w-[31px] flex-col items-center pt-[8px]">
          <div className="flex h-[23px] w-[31px] items-center justify-center rounded-[1px] border border-[#30353b] bg-[#2b3541]"><Bars w={25} color="#3f8fd4" /></div>
          <svg width="9" height="11" className="ml-[2px] mt-[21px]" fill="#dcdcdc"><path d="M0 0v11L9 5.500Z" /></svg>
        </div>
        <div className="ml-[9px] flex w-[241px] flex-col">
          <div className="h-[21px] text-[13px] leading-[19px] tracking-[-0.22px] text-[#f4f4f4]">{t.name}</div>
          <div className="flex h-[18px] items-center">
            <div className={`${tb} w-[41px]`}><span className="flex w-[20px] items-center justify-center border-r border-[#2f2f2f]">M</span><span className="flex flex-1 items-center justify-center">S</span></div>
            <div className={`${tb} ml-[6px] w-[41px]`}><span className={`flex w-[20px] items-center justify-center border-r border-[#2f2f2f] ${sel ? "text-[#e2362e]" : ""}`}>R</span><span className="flex flex-1 items-center justify-center">I</span></div>
            <div className="ml-[12px] flex h-[18px] w-[63px] items-center justify-center rounded-[3px] border border-[#234069] bg-[#2b5c9b] pt-px text-[11.5px] font-medium text-white">Track</div>
            <div className="ml-[11px] flex h-[12px] w-[63px] items-center rounded-full bg-[#2d2f2d]">
              <svg width="63" height="20">
                {t.meter === 1 && <rect x="4" y="7" width="29" height="6" fill="#40cf55" />}
                {t.meter === 2 && <><rect x="4" y="6" width="30" height="3" fill="#40cf55" /><rect x="4" y="11" width="28" height="3" fill="#40cf55" /></>}
                <circle cx={t.knob} cy="10" r="9.5" fill="none" stroke="#333" />
                <circle cx={t.knob} cy="10" r="8.5" fill={t.meter === 1 ? "#b9cfb9" : "#8b8d8b"} fillOpacity={t.meter === 1 ? 0.75 : 0.93} stroke="#bfbfbf" />
                {t.meter === 1 && <rect x="20.500" y="7" width="12.500" height="6" fill="#8ee79a" />}
                {t.meter === 2 && <path d="M41.500 5.500v3M38.500 10.500v3" stroke="#7edb8b" />}
              </svg>
            </div>
          </div>
          <div className="mt-[9px] flex h-[18px] text-[11.5px] font-medium">
            <div className="flex w-[75px] items-center justify-between rounded-[3px] border border-[#1e5527] bg-[#2a7d36] pl-[7px] pr-[3px] pt-px text-white">Read<UpDown color="#e2f0e2" h={10} /></div>
            <div className="ml-[6px] flex w-[95px] items-center justify-between rounded-[3px] border border-[#343434] bg-[#4a4a4a] pl-[7px] pr-[3px] pt-px text-[#ffe84f]"><span className="tracking-[-0.1px]">Volume</span><UpDown color="#d9cd4d" h={10} /></div>
            <div className="ml-[6px] flex w-[58px] items-center justify-center bg-[#272727] text-[12px] text-[#ffe84f]">{t.db}</div>
          </div>
        </div>
      </div>
    </div>
  );
}

function Lane({ t }: { t: Track }) {
  const line = t.pts.map(([x, y], i) => `${i ? "L" : "M"}${x} ${y + 0.5}`).join("");
  const bottom = t.top + t.height - 1;
  const first = t.n === 1;
  return (
    <div className={`relative overflow-hidden ${t.h} border-b border-[#1c1c1c] bg-[#292929]`}>
      <svg width="1376" height={t.height} viewBox={`534 ${t.top} 1376 ${t.height}`} className="absolute left-0 top-0">
        <path d={GRID.map((x) => `M${x} ${t.top}v18`).join("")} stroke="#404040" />
        <path d={`M534 ${t.top + 18.5}h1376`} stroke="#1f1f1f" />
      </svg>
      {t.regions.map((r) => (
        <div key={r.name} className={`absolute flex flex-col overflow-hidden rounded-[4px] border border-[#0b0f14] bg-[#2a4d77] ${first ? "top-0" : "top-px"}`} style={{ left: r.x - 534, width: r.r - r.x + 1, height: t.height - (first ? 1 : 2) }}>
          <div className={`flex items-center bg-[#2a4d77] pl-[6px] text-[11px] font-medium tracking-[-0.1px] text-[#dfe9f5] ${first ? "h-[18px]" : "h-[17px]"}`}>
            <span>{r.name}</span>
            {r.dot && <span className="ml-[10px] h-[10px] w-[10px] rounded-full border-[1.2px] border-[#dfe9f5]" />}
            {r.second && <><span className="ml-[951px]">{r.name}</span><span className="ml-[10px] h-[10px] w-[10px] rounded-full border-[1.2px] border-[#dfe9f5]" /></>}
          </div>
          <div className="mx-px mb-px flex flex-1 justify-between border border-black bg-[#16202a]">
            <div className={r.fadeIn ? "ml-[3px] h-[50px] w-px bg-[#59636c]" : ""} /><div className={r.fadeOut ? "h-[50px] w-px bg-[#59636c]" : ""} />
          </div>
        </div>
      ))}
      <svg width="1376" height={t.height} viewBox={`534 ${t.top} 1376 ${t.height}`} className="absolute left-0 top-0" fontFamily="Inter, Roboto, sans-serif">
        {t.regions.map((r) => <path key={r.x} d={`M${r.x + 3} ${t.wy}H${r.r - 3}`} stroke="#213b59" />)}
        <path d={wavePath(t)} stroke="#213b59" fill="none" />
        <path d={`${line}L1910 ${bottom}L543 ${bottom}Z`} fill="#fac837" fillOpacity=".072" />
        <path d={line} stroke="#ffe84a" strokeWidth="1.1" fill="none" />
        {t.pts.slice(1).map(([x, y], i) => {
          const [px, py] = t.pts[i];
          return Math.abs(y - py) > 3 && t.pts[i + 1][2] === undefined ? <path key={i} d={`M${px} ${py + 0.5}L${x} ${y + 0.5}`} stroke="#ffe84a" strokeWidth="2" /> : null;
        })}
        {t.pts.filter((p) => p[2] === undefined).map(([x, y], i) => <circle key={i} cx={x} cy={y + 0.3} r="3" fill="#ffe63e" stroke="#2a2a1c" strokeWidth=".8" />)}
        {t.labels.map(([x, y, s], i) => (
          <text key={i} x={x} y={y + 4} fontSize="10.4" fontWeight="700" fill="#f8e34e" stroke="#1b1d1e" strokeWidth="1" strokeOpacity=".4" paintOrder="stroke">{s}</text>
        ))}
      </svg>
    </div>
  );
}

const hbtn = "flex h-[21px] w-[33px] items-center justify-center rounded-[3px] border border-[#2a2a2a] bg-[#3d3d3d] shadow-[0_1px_0_#555]";

export default function App() {
  return (
    <div className="flex h-[1057px] w-[1913px] flex-col overflow-hidden bg-[#8a8a8a] font-['Inter','Roboto',sans-serif] antialiased">
      <div className="flex h-[80px] shrink-0 flex-col rounded-tr-[5px] bg-[linear-gradient(#b7b7b7,#868686)]">
        <div className="flex h-[27px] items-start">
          <div className="ml-[1px] mt-[5px] flex gap-[8px]">
            <div className="flex h-[12px] w-[12px] items-center justify-center rounded-full border border-[#e0443e] bg-[#fc5753]"><div className="h-[4px] w-[4px] rounded-full bg-[#4a0a08]" /></div>
            <div className="h-[12px] w-[12px] rounded-full border border-[#dea034] bg-[#fdbc40]" />
            <div className="h-[12px] w-[12px] rounded-full border border-[#1fa533] bg-[#27c138]" />
          </div>
          <div className="ml-[841px] mt-[4px] flex items-center gap-[6px]">
            <svg width="11" height="15"><rect width="11" height="15" rx="1" fill="#6c7072" /><circle cx="5.500" cy="6" r="3.600" fill="#cdd5d8" /><path d="M2 12.500h7" stroke="#494b4c" /></svg>
            <span className="text-[13px] leading-[15px] tracking-[-0.05px] text-[#1c1c1c]">Untitled - Tracks</span>
          </div>
        </div>
        <Toolbar />
      </div>

      <div className="flex h-[977px] items-start">
        <div className="mt-[2px] flex h-[974px] w-[205px] flex-col overflow-hidden rounded-b-[3px] border-b border-r border-black bg-[#535353]">
          <PropPanel />
          <div className="flex"><Strip /><Strip master /></div>
        </div>

        <div className="flex h-[976px] w-[1708px] flex-col rounded-[4px] border-2 border-[#71a9f3] bg-black p-px">
          <MenuBar />
          <div className="relative flex flex-1">
            <div className="flex w-[326px] flex-col border-r border-black bg-[#535353]">
              <div className="flex h-[36px] items-center border-b border-black bg-[#4a4a4a] px-[8px] pb-px">
                <div className={hbtn}><svg width="11" height="11" stroke="#fff" strokeWidth="1.300"><path d="M5.500 0v11M0 5.500h11" /></svg></div>
                <div className={`${hbtn} ml-[8px]`}><svg width="18" height="16" fill="none"><rect x=".5" y=".5" width="13" height="11" rx="1" fill="#fff" /><path d="M7 2.500v7M3.500 6h7" stroke="#222" strokeWidth="1.300" /><path d="M15.500 3.500H17v11H4.500V13" stroke="#fff" strokeWidth="1.300" /></svg></div>
                <div className={`${hbtn} ml-[8px] text-[15px] text-white`}>S</div>
                <div className={`${hbtn} ml-auto`}><svg width="14" height="14" fill="none" stroke="#fff" strokeWidth="1.300"><rect x="1" y="1" width="12" height="12" /><path d="M1 2.500h12" strokeWidth="3" /><path d="m4.500 7 2.500 2.500L9.500 7" /></svg></div>
              </div>
              {tracks.map((t) => <TrackHeader key={t.n} t={t} />)}
            </div>

            <div className="flex w-[1376px] flex-col bg-[#272727]">
              <div className="flex h-[36px] border-b border-black bg-[#2d2d2d]">
                <div className="w-[9px] border-r border-dotted border-[#555]"><svg width="8" height="18"><path d="M0 1.500 6 8.500 0 15.500Z" fill="#5a5a5a" stroke="#222" /></svg></div>
                <div className="flex h-[35px] w-[1367px] flex-col overflow-hidden">
                  <div className="flex h-[18px] shrink-0 items-end border-b border-black bg-[linear-gradient(90deg,#b68f28_1332px,#161616_1332px,#3a3a3a_1334px)]">
                    {GRID.map((g, i) => (
                      <div key={g} className={`flex h-[14px] shrink-0 items-center border-[#15130a] pb-[2px] pl-[4px] text-[12.5px] tracking-[-0.4px] text-[#1a1608] ${i ? "w-[54.58px] border-l" : "w-[55.2px]"}`}>
                        {i === 24 ? <><span>3,0</span><span className="text-[#d8d8d8]">73</span></> : i === 25 ? "" : (1 + 128 * i).toLocaleString("en-US")}
                      </div>
                    ))}
                  </div>
                  <svg width="1367" height="17" viewBox="543 130 1367 17"><path d={GRID.slice(1).map((x) => `M${x} 130v17`).join("")} stroke="#5c5c5c" /></svg>
                </div>
              </div>
              {tracks.map((t) => <Lane key={t.n} t={t} />)}
            </div>

            <svg width="16" height="943" viewBox="0 0 16 943" className="pointer-events-none absolute left-[333px] top-0">
              <path d="M7.500 28V943" stroke="#fff" strokeWidth="1.400" />
              <path d="M1.500 18h12v7l-6 6-6-6Z" fill="#dcdcdc" stroke="#444" strokeWidth=".6" /><path d="M7.500 20v10" stroke="#fff" />
            </svg>
          </div>
        </div>
      </div>
    </div>
  );
}
